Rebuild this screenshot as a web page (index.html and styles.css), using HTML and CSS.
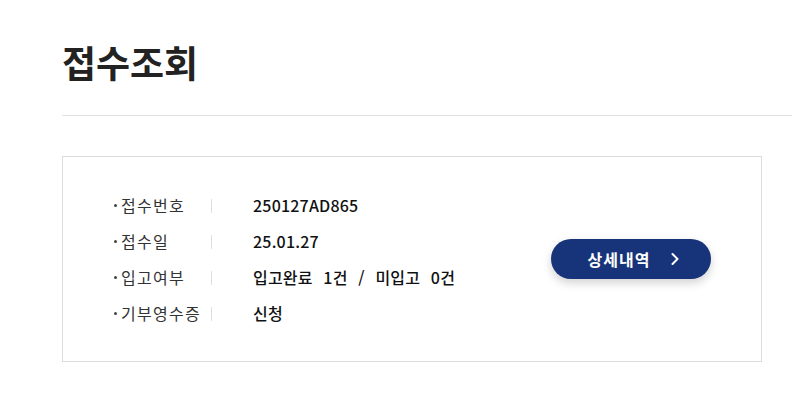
FILE: index.html
```html
<!DOCTYPE html>
<html lang="ko">
<head>
    <meta charset="UTF-8">
    <meta name="viewport" content="width=device-width, initial-scale=1.0">
    <title>접수조회</title>
    <link rel="stylesheet" href="styles.css">
</head>
<body>
    <div id="wrap">
        <h2 class="title">접수조회</h2>
        <div class="card">
            <ul class="info">
                <li><span class="label">접수번호</span><span class="value">250127AD865</span></li>
                <li><span class="label">접수일</span><span class="value">25.01.27</span></li>
                <li><span class="label">입고여부</span><span class="value">입고완료 1건 / 미입고 0건</span></li>
                <li><span class="label">기부영수증</span><span class="value">신청</span></li>
            </ul>
            <a class="btn" href="#">상세내역
                <svg width="10" height="14" viewBox="0 0 10 14"><path d="M2.5 2 L7.5 7 L2.5 12" fill="none" stroke="#fff" stroke-width="2" stroke-linecap="round" stroke-linejoin="round"/></svg>
            </a>
        </div>
    </div>
</body>
</html>
```

FILE: styles.css
```css
body{
    margin: 0;
    font-family: "Noto Sans CJK KR", "Noto Sans", sans-serif;
    color: #222;
    background: #fff;
}
ul,h2{
    margin: 0;
    padding: 0;
}
li{
    list-style: none;
}
#wrap{
    padding: 36px 0 0 62px;
}
.title{
    font-size: 37px;
    font-weight: 700;
    line-height: 52px;
    color: #222;
    padding-bottom: 27px;
    border-bottom: 1px solid #e2e2e2;
}
.card{
    width: 700px;
    height: 206px;
    box-sizing: border-box;
    margin-top: 40px;
    border: 1px solid #dcdcdc;
    padding: 0 50px 0 48px;
    display: flex;
    align-items: center;
    justify-content: space-between;
}
.info li{
    display: flex;
    align-items: center;
    height: 36px;
    font-size: 16px;
}
.label{
    position: relative;
    width: 142px;
    flex-shrink: 0;
    color: #333;
    padding-left: 10px;
    box-sizing: border-box;
    letter-spacing: 1.3px;
}
.label::before{
    content: "";
    position: absolute;
    left: 3px;
    top: 50%;
    width: 3px;
    height: 3px;
    margin-top: -1px;
    background: #444;
    border-radius: 50%;
}
.label::after{
    content: "";
    position: absolute;
    left: 100px;
    top: 50%;
    width: 1px;
    height: 14px;
    margin-top: -6px;
    background: #ddd;
}
.value{
    color: #111;
    font-weight: 500;
    letter-spacing: 0.2px;
    word-spacing: 6px;
}
.btn{
    width: 160px;
    height: 40px;
    border-radius: 20px;
    background: #17337a;
    color: #fff;
    font-size: 16px;
    font-weight: 700;
    letter-spacing: 1px;
    text-decoration: none;
    display: flex;
    align-items: center;
    justify-content: center;
    gap: 20px;
    box-shadow: 0 4px 10px rgba(0,0,0,0.18);
    padding-left: 6px;
    box-sizing: border-box;
}
```
